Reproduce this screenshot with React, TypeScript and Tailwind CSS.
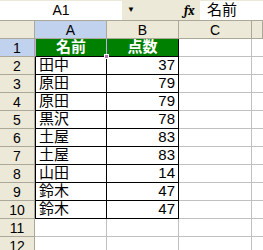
import React from "react";

const rows: [string, number][] = [
  ["田中", 37],
  ["原田", 79],
  ["原田", 79],
  ["黒沢", 78],
  ["土屋", 83],
  ["土屋", 83],
  ["山田", 14],
  ["鈴木", 47],
  ["鈴木", 47],
];

const font = { fontFamily: '"Liberation Sans", "Noto Sans CJK JP", sans-serif' };

const HeadCell = ({ children, active }: { children?: React.ReactNode; active?: boolean }) => (
  <div
    className={`flex h-[18px] items-center justify-center border-r border-b border-[#aca899] text-[14px] leading-none text-black ${
      active ? "bg-[#c1d2ee]" : "bg-[#ece9d8]"
    }`}
  >
    {children}
  </div>
);

export default function App() {
  return (
    <div className="h-[250px] w-[263px] overflow-hidden bg-white" style={font}>
      {/* formula bar */}
      <div className="flex h-[20px] items-center bg-[#ece9d8]">
        <div className="flex h-[19px] w-[122px] items-center justify-center bg-white text-[14px]">A1</div>
        <div className="flex w-[18px] justify-center text-[8px] text-black">▼</div>
        <div className="ml-[44px] w-[16px] font-serif text-[13px] font-bold italic leading-none">fx</div>
        <div className="flex h-[19px] flex-1 items-center bg-white pl-[7px] text-[15px]">名前</div>
      </div>

      {/* sheet */}
      <div className="grid grid-cols-[35px_72px_72px_73px_1fr] border-t border-[#aca899]">
        <HeadCell />
        <HeadCell active>A</HeadCell>
        <HeadCell>B</HeadCell>
        <HeadCell>C</HeadCell>
        <HeadCell />

        <HeadCell active>1</HeadCell>
        <div className="relative flex h-[18px] items-center justify-center border-x border-[#c8a8e8] border-b-black bg-[#008000] text-[15px] font-bold text-white border-b">
          名前
          <div className="absolute right-[-3px] bottom-[-3px] h-[5px] w-[5px] border border-white bg-[#b070b0]" />
        </div>
        <div className="flex h-[18px] items-center justify-center border-r border-b border-black bg-[#008000] text-[15px] font-bold text-white">
          点数
        </div>
        <div className="h-[18px] border-r border-b border-[#c0c0c0]" />
        <div className="h-[18px] border-b border-[#c0c0c0]" />

        {rows.map(([name, score], i) => (
          <React.Fragment key={i}>
            <HeadCell>{i + 2}</HeadCell>
            <div className="flex h-[18px] items-center border-x border-b border-black pl-[3px] text-[15px]">
              {name}
            </div>
            <div className="flex h-[18px] items-center justify-end border-r border-b border-black pr-[3px] text-[15px]">
              {score}
            </div>
            <div className="h-[18px] border-r border-b border-[#c0c0c0]" />
            <div className="h-[18px] border-b border-[#c0c0c0]" />
          </React.Fragment>
        ))}

        {[11, 12].map((n) => (
          <React.Fragment key={n}>
            <HeadCell>{n}</HeadCell>
            <div className="h-[18px] border-r border-b border-[#c0c0c0]" />
            <div className="h-[18px] border-r border-b border-[#c0c0c0]" />
            <div className="h-[18px] border-r border-b border-[#c0c0c0]" />
            <div className="h-[18px] border-b border-[#c0c0c0]" />
          </React.Fragment>
        ))}
      </div>
    </div>
  );
}
